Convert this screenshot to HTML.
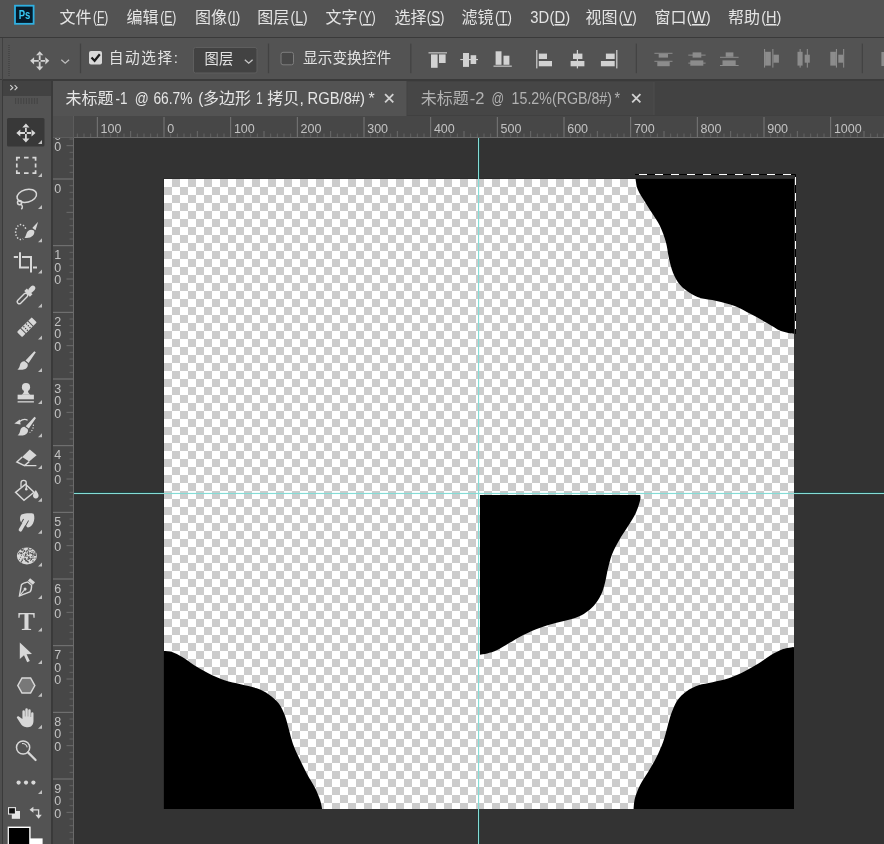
<!DOCTYPE html><html lang="zh-CN"><head><meta charset="utf-8"><title>Photoshop</title><style>
html,body{margin:0;padding:0}
body{width:884px;height:844px;background:#333;position:relative;overflow:hidden;font-family:"Liberation Sans","Noto Sans CJK SC",sans-serif;color:#ddd}
.abs{position:absolute}
#menubar,#tabbar,#hruler,#vruler,#toolbox,#optbar{will-change:transform}
.l{font-size:14.5px;word-spacing:2px}
#menubar{left:0;top:0;width:884px;height:37px;background:#535353}
#menubar span.mi{position:absolute;top:5px;font-size:16px;line-height:24px;color:#e6e6e6;white-space:nowrap}
#menubar u{text-decoration:underline;text-underline-offset:2px}
#optbar{left:0;top:38px;width:884px;height:41.4px;background:#535353;overflow:hidden}
.ot{font-size:14.7px;line-height:24px;color:#e2e2e2;white-space:nowrap}
#toolbox{left:3px;top:81px;width:48px;height:763px;background:#535353}
#tabbar{left:53px;top:81px;width:831px;height:35px;background:#424242}
.tab{position:absolute;top:0;height:35px;font-size:16px;line-height:34px;white-space:nowrap}
#hruler{left:53px;top:116px;width:831px;height:22px;background:#474747;overflow:hidden}
#vruler{left:53px;top:138px;width:21px;height:706px;background:#474747;overflow:hidden}
#work{left:74px;top:138px;width:810px;height:706px;background:#333;overflow:hidden}
</style></head><body>
<div class="abs" style="left:0;top:0;width:884px;height:844px;background:#3a3a3a"></div>
<div class="abs" style="left:0;top:80px;width:2px;height:764px;background:#4e4e4e"></div>
<!--EDGE-->
<div id="menubar" class="abs"><svg class="abs" style="left:0;top:0" width="884" height="37" viewBox="0 0 884 37" font-family="Liberation Sans, Noto Sans CJK SC, sans-serif" font-size="16" fill="#e4e4e4"><rect x="15" y="5.7" width="18.6" height="18.1" fill="#041a2a" stroke="#2fb0e2" stroke-width="1.8"/><text x="18.7" y="18.8" font-size="12" font-weight="bold" fill="#38c8f2" textLength="11.6" lengthAdjust="spacingAndGlyphs">Ps</text><text x="59.4" y="22.8">文件</text><text x="93.0" y="23" font-size="15.6" textLength="15.3" lengthAdjust="spacingAndGlyphs">(<tspan text-decoration="underline">F</tspan>)</text><text x="126.6" y="22.8">编辑</text><text x="160.2" y="23" font-size="15.6" textLength="16.1" lengthAdjust="spacingAndGlyphs">(<tspan text-decoration="underline">E</tspan>)</text><text x="195.0" y="22.8">图像</text><text x="227.4" y="23" font-size="15.6" textLength="12.8" lengthAdjust="spacingAndGlyphs">(<tspan text-decoration="underline">I</tspan>)</text><text x="257.3" y="22.8">图层</text><text x="290.6" y="23" font-size="15.6" textLength="17.0" lengthAdjust="spacingAndGlyphs">(<tspan text-decoration="underline">L</tspan>)</text><text x="325.4" y="22.8">文字</text><text x="358.7" y="23" font-size="15.6" textLength="17.0" lengthAdjust="spacingAndGlyphs">(<tspan text-decoration="underline">Y</tspan>)</text><text x="394.4" y="22.8">选择</text><text x="426.8" y="23" font-size="15.6" textLength="17.7" lengthAdjust="spacingAndGlyphs">(<tspan text-decoration="underline">S</tspan>)</text><text x="461.6" y="22.8">滤镜</text><text x="494.9" y="23" font-size="15.6" textLength="17.0" lengthAdjust="spacingAndGlyphs">(<tspan text-decoration="underline">T</tspan>)</text><text x="530.2" y="23" font-size="15.6" textLength="18.9" lengthAdjust="spacingAndGlyphs">3D</text><text x="549.6" y="23" font-size="15.6" textLength="20.5" lengthAdjust="spacingAndGlyphs">(<tspan text-decoration="underline">D</tspan>)</text><text x="585.4" y="22.8">视图</text><text x="618.7" y="23" font-size="15.6" textLength="17.9" lengthAdjust="spacingAndGlyphs">(<tspan text-decoration="underline">V</tspan>)</text><text x="654.4" y="22.8">窗口</text><text x="686.8" y="23" font-size="15.6" textLength="24.0" lengthAdjust="spacingAndGlyphs">(<tspan text-decoration="underline">W</tspan>)</text><text x="728.0" y="22.8">帮助</text><text x="761.2" y="23" font-size="15.6" textLength="20.2" lengthAdjust="spacingAndGlyphs">(<tspan text-decoration="underline">H</tspan>)</text></svg></div>
<div id="optbar" class="abs">
<svg class="abs" style="left:0;top:0" width="884" height="42" viewBox="0 38 884 42"><rect x="8" y="45" width="2" height="1" fill="#474747"/><rect x="8" y="47" width="2" height="1" fill="#474747"/><rect x="8" y="49" width="2" height="1" fill="#474747"/><rect x="8" y="51" width="2" height="1" fill="#474747"/><rect x="8" y="53" width="2" height="1" fill="#474747"/><rect x="8" y="55" width="2" height="1" fill="#474747"/><rect x="8" y="57" width="2" height="1" fill="#474747"/><rect x="8" y="59" width="2" height="1" fill="#474747"/><rect x="8" y="61" width="2" height="1" fill="#474747"/><rect x="8" y="63" width="2" height="1" fill="#474747"/><rect x="8" y="65" width="2" height="1" fill="#474747"/><rect x="8" y="67" width="2" height="1" fill="#474747"/><rect x="8" y="69" width="2" height="1" fill="#474747"/><rect x="8" y="71" width="2" height="1" fill="#474747"/><rect x="8" y="73" width="2" height="1" fill="#474747"/><rect x="8" y="75" width="2" height="1" fill="#474747"/><path d="M33.60 59.90 H45.80 V61.70 H33.60 Z M38.80 54.70 V66.90 H40.60 V54.70 Z M39.70 51.20 L43.30 55.20 L36.10 55.20 Z M39.70 70.40 L43.30 66.40 L36.10 66.40 Z M30.10 60.80 L34.10 57.20 L34.10 64.40 Z M49.30 60.80 L45.30 57.20 L45.30 64.40 Z " fill="#d2d2d2"/><path d="M61.3 59.8 L65.2 63.2 L69.1 59.8" fill="none" stroke="#bdbdbd" stroke-width="1.3"/><rect x="79.9" y="43.6" width="1.2" height="29.6" fill="#424242"/><rect x="267.9" y="43.6" width="1.2" height="29.6" fill="#424242"/><rect x="410.2" y="43.6" width="1.2" height="29.6" fill="#424242"/><rect x="635.7" y="43.6" width="1.2" height="29.6" fill="#424242"/><rect x="861.7" y="43.6" width="1.2" height="29.6" fill="#424242"/><rect x="89" y="51" width="13" height="13.5" rx="2" fill="#d8d8d8"/><path d="M91.5 57.5 L94.6 60.8 L99.8 54.2" fill="none" stroke="#1a1a1a" stroke-width="2.2"/><rect x="193.5" y="47.5" width="63.5" height="25.5" rx="2" fill="#424242" stroke="#5e5e5e" stroke-width="1"/><path d="M244.8 59.8 L248.7 63.2 L252.6 59.8" fill="none" stroke="#c8c8c8" stroke-width="1.3"/><rect x="281" y="52.3" width="12.5" height="12.5" rx="2" fill="#484848" stroke="#7d7d7d" stroke-width="1"/><rect x="428.5" y="52.3" width="18.5" height="1.1" fill="#d2d2d2"/><rect x="431.0" y="54.4" width="6.6" height="13.4" fill="#d2d2d2"/><rect x="439.0" y="54.4" width="6.6" height="8.6" fill="#d2d2d2"/><rect x="460.3" y="59.0" width="17.7" height="1.1" fill="#d2d2d2"/><rect x="463.0" y="53.0" width="6.0" height="13.9" fill="#d2d2d2"/><rect x="470.6" y="55.2" width="5.6" height="8.8" fill="#d2d2d2"/><rect x="493.5" y="65.6" width="18.3" height="1.1" fill="#d2d2d2"/><rect x="495.6" y="51.3" width="5.9" height="13.5" fill="#d2d2d2"/><rect x="503.5" y="55.7" width="5.9" height="9.1" fill="#d2d2d2"/><rect x="536.2" y="50.0" width="1.2" height="18.4" fill="#d2d2d2"/><rect x="538.8" y="53.6" width="8.2" height="5.4" fill="#d2d2d2"/><rect x="538.8" y="61.0" width="13.2" height="5.3" fill="#d2d2d2"/><rect x="576.8" y="50.0" width="1.2" height="18.4" fill="#d2d2d2"/><rect x="573.0" y="53.6" width="9.4" height="5.4" fill="#d2d2d2"/><rect x="570.6" y="61.0" width="13.8" height="5.3" fill="#d2d2d2"/><rect x="616.2" y="50.0" width="1.2" height="18.4" fill="#d2d2d2"/><rect x="605.9" y="53.6" width="8.8" height="5.4" fill="#d2d2d2"/><rect x="600.9" y="61.0" width="13.8" height="5.3" fill="#d2d2d2"/><rect x="654.4" y="52.8" width="18.1" height="1.0" fill="#8c8c8c"/><rect x="658.7" y="53.8" width="9.3" height="3.8" fill="#8c8c8c"/><rect x="654.4" y="60.8" width="18.1" height="1.0" fill="#8c8c8c"/><rect x="657.3" y="61.8" width="12.4" height="4.4" fill="#8c8c8c"/><rect x="688.3" y="54.6" width="17.3" height="1.0" fill="#8c8c8c"/><rect x="692.6" y="52.4" width="8.7" height="5.2" fill="#8c8c8c"/><rect x="688.3" y="62.6" width="17.3" height="1.0" fill="#8c8c8c"/><rect x="690.3" y="60.4" width="13.0" height="5.3" fill="#8c8c8c"/><rect x="720.0" y="56.8" width="18.6" height="1.0" fill="#8c8c8c"/><rect x="725.7" y="52.4" width="7.7" height="4.4" fill="#8c8c8c"/><rect x="720.0" y="65.0" width="18.6" height="1.0" fill="#8c8c8c"/><rect x="722.5" y="60.4" width="13.2" height="4.6" fill="#8c8c8c"/><rect x="764.0" y="49.0" width="1.1" height="18.6" fill="#8c8c8c"/><rect x="765.1" y="51.8" width="5.7" height="13.8" fill="#8c8c8c"/><rect x="772.3" y="49.0" width="1.1" height="18.6" fill="#8c8c8c"/><rect x="773.4" y="54.7" width="5.5" height="8.0" fill="#8c8c8c"/><rect x="799.6" y="49.0" width="1.1" height="18.6" fill="#8c8c8c"/><rect x="797.5" y="51.8" width="5.1" height="13.8" fill="#8c8c8c"/><rect x="806.8" y="49.0" width="1.1" height="18.6" fill="#8c8c8c"/><rect x="804.7" y="54.7" width="5.1" height="8.0" fill="#8c8c8c"/><rect x="835.9" y="49.0" width="1.1" height="18.6" fill="#8c8c8c"/><rect x="830.3" y="51.8" width="5.6" height="13.8" fill="#8c8c8c"/><rect x="843.1" y="49.0" width="1.1" height="18.6" fill="#8c8c8c"/><rect x="838.3" y="54.7" width="4.8" height="8.0" fill="#8c8c8c"/><rect x="881.4" y="52.0" width="2.6" height="14.0" fill="#8c8c8c"/></svg><span class="abs ot" style="left:108.7px;top:7.5px;letter-spacing:1.6px">自动选择<span class="l" style="font-size:15px">:</span></span><span class="abs ot" style="left:204.6px;top:8.6px;font-size:14.3px">图层</span><span class="abs ot" style="left:303px;top:7.5px">显示变换控件</span>
</div>
<div id="toolbox" class="abs">
<div class="abs" style="left:0;top:0;width:48px;height:15px;background:#424242"></div>
<svg class="abs" style="left:0;top:0" width="48" height="763" viewBox="3 81 48 763"><path d="M10.3 85.2 L12.8 87.7 L10.3 90.2 M14.6 85.2 L17.1 87.7 L14.6 90.2" fill="none" stroke="#cfcfcf" stroke-width="1.15"/><rect x="15.0" y="98" width="1.2" height="6" fill="#454545"/><rect x="17.7" y="98" width="1.2" height="6" fill="#454545"/><rect x="20.4" y="98" width="1.2" height="6" fill="#454545"/><rect x="23.1" y="98" width="1.2" height="6" fill="#454545"/><rect x="25.8" y="98" width="1.2" height="6" fill="#454545"/><rect x="28.5" y="98" width="1.2" height="6" fill="#454545"/><rect x="31.2" y="98" width="1.2" height="6" fill="#454545"/><rect x="33.9" y="98" width="1.2" height="6" fill="#454545"/><rect x="36.6" y="98" width="1.2" height="6" fill="#454545"/><rect x="7" y="118" width="37.5" height="28.5" rx="1.5" fill="#383838"/><path d="M19.80 132.10 H32.00 V133.90 H19.80 Z M25.00 126.90 V139.10 H26.80 V126.90 Z M25.90 123.40 L29.50 127.40 L22.30 127.40 Z M25.90 142.60 L29.50 138.60 L22.30 138.60 Z M16.30 133.00 L20.30 129.40 L20.30 136.60 Z M35.50 133.00 L31.50 129.40 L31.50 136.60 Z " fill="#d8d8d8"/><path d="M42 140.0 V144.0 H38 Z" fill="#c0c0c0"/><path d="M16.8 160.8 V157.7 H20 M24 157.7 H28.6 M32.4 157.7 H35.6 V160.8 M35.6 163.4 V167.6 M35.6 170.2 V173.2 H32.4 M28.6 173.2 H24 M20 173.2 H16.8 V170.2 M16.8 167.6 V163.4" fill="none" stroke="#d8d8d8" stroke-width="1.7"/><path d="M42 173.0 V177.0 H38 Z" fill="#c0c0c0"/><g fill="none" stroke="#d8d8d8" stroke-width="1.5"><ellipse cx="26.8" cy="195.8" rx="9.9" ry="6.3" transform="rotate(-14 26.8 195.8)"/><circle cx="19.6" cy="202.6" r="2.1"/><path d="M20.8 204.3 C23 205.5 22.6 208 21.3 209.3"/></g><path d="M42 205.0 V209.0 H38 Z" fill="#c0c0c0"/><path d="M25.7 228.8 A5.3 7.5 0 1 0 23.2 238.9" fill="none" stroke="#d8d8d8" stroke-width="1.5" stroke-dasharray="1.4 1.75"/><path d="M38.1 221.7 L35.5 230.2 L32.3 227.9 Z" fill="#d8d8d8"/><path d="M33.9 230.5 C31 228.5 27.6 230.4 26.7 233 C26.1 234.8 25.7 236.4 24.5 237.8 C27.6 238.3 31 237.7 33 235.5 C34.5 233.8 34.7 231.8 33.9 230.5 Z" fill="#d8d8d8"/><path d="M42 238.2 V242.2 H38 Z" fill="#c0c0c0"/><path d="M13.8 257 H18 M22 257 H31 V272.4 M20 252.3 V267.5 H29 M33 267.5 H37" fill="none" stroke="#d8d8d8" stroke-width="2"/><path d="M42 269.6 V273.6 H38 Z" fill="#c0c0c0"/><g transform="rotate(45 26 295)"><rect x="24" y="293.4" width="4" height="13.1" rx="2" fill="none" stroke="#d8d8d8" stroke-width="1.4"/><rect x="22" y="289.8" width="8" height="3.7" fill="#d8d8d8"/><rect x="23.5" y="282.8" width="5" height="8" rx="2.5" fill="#d8d8d8"/></g><path d="M42 303.4 V307.4 H38 Z" fill="#c0c0c0"/><g transform="rotate(-45 26.9 327.2)"><rect x="16.5" y="323.6" width="20.8" height="7.2" rx="0.9" fill="#d8d8d8"/><rect x="21.3" y="323" width="0.95" height="8.4" fill="#535353"/><rect x="31.55" y="323" width="0.95" height="8.4" fill="#535353"/><circle cx="25.10" cy="324.70" r="0.72" fill="#474747"/><circle cx="25.10" cy="327.20" r="0.72" fill="#474747"/><circle cx="25.10" cy="329.60" r="0.72" fill="#474747"/><circle cx="28.90" cy="324.70" r="0.72" fill="#474747"/><circle cx="28.90" cy="327.20" r="0.72" fill="#474747"/><circle cx="28.90" cy="329.60" r="0.72" fill="#474747"/></g><path d="M42 335.4 V339.4 H38 Z" fill="#c0c0c0"/><path d="M34.3 351.2 L35.8 352.3 L28.6 362.9 L25.5 360.6 Z M24.6 361.3 L27.4 363.5 C28.6 366 27 368.6 24.4 369.3 C22 370 19.4 369.8 17.4 369.6 C19.4 368.4 19.6 366.5 20 364.8 C20.6 362.4 22.6 361 24.6 361.3 Z" fill="#d8d8d8"/><path d="M42 368.0 V372.0 H38 Z" fill="#c0c0c0"/><circle cx="26" cy="387.2" r="4.1" fill="#d8d8d8"/><path d="M24 389.5 H28 C27.8 392 28.6 393.6 30.4 394.8 H21.6 C23.4 393.6 24.2 392 24 389.5 Z" fill="#d8d8d8"/><rect x="17.6" y="394.7" width="16.3" height="4.6" fill="#d8d8d8"/><rect x="17.6" y="401.2" width="16.3" height="1.3" fill="#d8d8d8"/><path d="M42 400.0 V404.0 H38 Z" fill="#c0c0c0"/><g transform="translate(0.2 65.6)"><path d="M34.3 351.2 L35.8 352.3 L28.6 362.9 L25.5 360.6 Z M24.6 361.3 L27.4 363.5 C28.6 366 27 368.6 24.4 369.3 C22 370 19.4 369.8 17.4 369.6 C19.4 368.4 19.6 366.5 20 364.8 C20.6 362.4 22.6 361 24.6 361.3 Z" fill="#d8d8d8"/></g><path d="M19.6 421.5 C22.5 419.2 25.5 419 27.6 420.2" fill="none" stroke="#d8d8d8" stroke-width="1.3"/><path d="M14.3 423.6 L19.8 419.6 L20.6 424.4 Z" fill="#d8d8d8"/><path d="M33.4 424.6 C33.6 428 32.4 431 29.6 432.6" fill="none" stroke="#d8d8d8" stroke-width="1.2" stroke-dasharray="1.2 1.6"/><path d="M42 433.2 V437.2 H38 Z" fill="#c0c0c0"/><path d="M29.8 449.6 L36.6 455.2 L29.2 461.6 L22.2 456.9 Z" fill="#d8d8d8"/><path d="M22.2 456.9 L16.8 462 L24.5 465.6 L29.2 461.6 M24.5 465.6 H36.4" fill="none" stroke="#d8d8d8" stroke-width="1.4"/><path d="M42 465.0 V469.0 H38 Z" fill="#c0c0c0"/><path d="M15.6 492.3 L25.5 484.2 L34 492.3 L24 500.3 Z" fill="none" stroke="#d8d8d8" stroke-width="1.5"/><path d="M26.3 489.5 V483 C26.3 479.5 21 479.5 21 483 V487" fill="none" stroke="#d8d8d8" stroke-width="1.3"/><circle cx="26.3" cy="489.3" r="1.3" fill="#d8d8d8"/><path d="M35.8 490 C37.5 492.5 38.6 494 38.6 495.6 a2.8 2.8 0 0 1 -5.6 0 C33 494 34.1 492.5 35.8 490 Z" fill="#d8d8d8"/><path d="M42 497.7 V501.7 H38 Z" fill="#c0c0c0"/><path d="M21.5 514.6 C25 513.2 30.5 513 33.6 513.8 C34.8 516.5 34.6 520.5 33 523.6 C31.6 526 29.5 527.6 27.6 527.6 L24 524 L20.5 521.6 C19.6 519 20 516 21.5 514.6 Z" fill="#d8d8d8"/><path d="M28.5 520.6 L23.5 529.4 M23.6 519 L21.6 522.6" stroke="#535353" stroke-width="1.1" fill="none"/><path d="M26.2 519.8 L20.4 529.8" stroke="#d8d8d8" stroke-width="3.5" stroke-linecap="round" fill="none"/><path d="M42 529.8 V533.8 H38 Z" fill="#c0c0c0"/><ellipse cx="26.9" cy="556" rx="10" ry="8.5" fill="#d8d8d8"/><circle cx="25.3" cy="558.7" r="0.7" fill="#535353"/><circle cx="32.9" cy="558.5" r="0.6" fill="#535353"/><circle cx="33.0" cy="558.0" r="0.5" fill="#535353"/><circle cx="24.7" cy="556.8" r="0.5" fill="#535353"/><circle cx="19.5" cy="559.2" r="0.5" fill="#535353"/><circle cx="28.1" cy="562.1" r="0.8" fill="#535353"/><circle cx="21.8" cy="553.7" r="0.8" fill="#535353"/><circle cx="35.1" cy="558.1" r="0.6" fill="#535353"/><circle cx="28.8" cy="558.1" r="0.6" fill="#535353"/><circle cx="28.5" cy="553.0" r="0.7" fill="#535353"/><circle cx="23.3" cy="552.3" r="0.7" fill="#535353"/><circle cx="29.0" cy="556.7" r="0.6" fill="#535353"/><circle cx="24.4" cy="551.4" r="0.6" fill="#535353"/><circle cx="21.6" cy="553.3" r="0.6" fill="#535353"/><circle cx="29.0" cy="549.7" r="0.6" fill="#535353"/><circle cx="20.9" cy="553.4" r="0.8" fill="#535353"/><circle cx="26.3" cy="551.8" r="0.8" fill="#535353"/><circle cx="31.3" cy="559.4" r="0.7" fill="#535353"/><circle cx="30.6" cy="560.5" r="0.5" fill="#535353"/><circle cx="22.9" cy="550.0" r="0.7" fill="#535353"/><circle cx="30.6" cy="552.9" r="0.7" fill="#535353"/><circle cx="21.1" cy="552.7" r="0.6" fill="#535353"/><circle cx="31.7" cy="549.6" r="0.6" fill="#535353"/><circle cx="25.7" cy="554.3" r="0.7" fill="#535353"/><circle cx="21.4" cy="549.8" r="0.7" fill="#535353"/><circle cx="25.7" cy="560.7" r="0.7" fill="#535353"/><circle cx="33.1" cy="556.8" r="0.6" fill="#535353"/><circle cx="28.6" cy="557.3" r="0.7" fill="#535353"/><circle cx="30.0" cy="558.8" r="0.6" fill="#535353"/><circle cx="28.7" cy="554.4" r="0.6" fill="#535353"/><circle cx="18.7" cy="553.8" r="0.7" fill="#535353"/><circle cx="30.1" cy="552.9" r="0.6" fill="#535353"/><circle cx="21.4" cy="561.7" r="0.8" fill="#535353"/><circle cx="29.2" cy="558.7" r="0.6" fill="#535353"/><circle cx="27.6" cy="561.4" r="0.7" fill="#535353"/><circle cx="26.9" cy="556.5" r="0.6" fill="#535353"/><circle cx="22.2" cy="560.3" r="0.8" fill="#535353"/><circle cx="24.5" cy="550.8" r="0.7" fill="#535353"/><circle cx="25.9" cy="554.4" r="0.8" fill="#535353"/><circle cx="28.5" cy="548.8" r="0.7" fill="#535353"/><circle cx="22.4" cy="559.1" r="0.5" fill="#535353"/><circle cx="25.4" cy="554.5" r="0.5" fill="#535353"/><circle cx="27.8" cy="559.0" r="0.6" fill="#535353"/><circle cx="27.0" cy="556.0" r="0.5" fill="#535353"/><circle cx="31.4" cy="558.8" r="0.5" fill="#535353"/><circle cx="32.0" cy="551.6" r="0.5" fill="#535353"/><circle cx="26.8" cy="560.6" r="0.6" fill="#535353"/><circle cx="33.0" cy="561.0" r="0.8" fill="#535353"/><circle cx="20.6" cy="557.2" r="0.5" fill="#535353"/><circle cx="31.2" cy="558.7" r="0.6" fill="#535353"/><circle cx="28.7" cy="553.2" r="0.5" fill="#535353"/><circle cx="33.3" cy="554.3" r="0.5" fill="#535353"/><circle cx="25.4" cy="555.7" r="0.7" fill="#535353"/><circle cx="35.4" cy="555.0" r="0.7" fill="#535353"/><circle cx="26.5" cy="560.7" r="0.6" fill="#535353"/><circle cx="27.8" cy="550.3" r="0.7" fill="#535353"/><circle cx="24.8" cy="559.2" r="0.7" fill="#535353"/><circle cx="35.4" cy="555.3" r="0.7" fill="#535353"/><circle cx="30.2" cy="549.9" r="0.6" fill="#535353"/><circle cx="21.4" cy="555.5" r="0.5" fill="#535353"/><circle cx="31.7" cy="556.7" r="0.6" fill="#535353"/><circle cx="23.7" cy="548.8" r="0.6" fill="#535353"/><circle cx="35.3" cy="553.0" r="0.8" fill="#535353"/><circle cx="24.1" cy="558.8" r="0.6" fill="#535353"/><circle cx="28.3" cy="559.3" r="0.7" fill="#535353"/><circle cx="33.7" cy="551.8" r="0.6" fill="#535353"/><circle cx="22.2" cy="550.3" r="0.5" fill="#535353"/><circle cx="22.2" cy="549.7" r="0.7" fill="#535353"/><circle cx="26.9" cy="550.6" r="0.6" fill="#535353"/><circle cx="28.2" cy="551.6" r="0.7" fill="#535353"/><circle cx="32.6" cy="555.1" r="0.6" fill="#535353"/><circle cx="34.3" cy="553.8" r="0.6" fill="#535353"/><circle cx="29.4" cy="558.2" r="0.8" fill="#535353"/><circle cx="28.1" cy="553.2" r="0.7" fill="#535353"/><circle cx="34.3" cy="555.2" r="0.6" fill="#535353"/><circle cx="23.7" cy="555.1" r="0.5" fill="#535353"/><circle cx="34.2" cy="554.9" r="0.7" fill="#535353"/><circle cx="32.4" cy="553.9" r="0.8" fill="#535353"/><circle cx="28.8" cy="552.8" r="0.6" fill="#535353"/><circle cx="25.7" cy="559.7" r="0.7" fill="#535353"/><circle cx="26.6" cy="561.1" r="0.5" fill="#535353"/><circle cx="31.5" cy="553.5" r="0.6" fill="#535353"/><circle cx="19.3" cy="552.3" r="0.6" fill="#535353"/><circle cx="32.6" cy="553.3" r="0.7" fill="#535353"/><circle cx="25.7" cy="555.8" r="0.6" fill="#535353"/><path d="M42 562.6 V566.6 H38 Z" fill="#c0c0c0"/><g transform="rotate(40 26 588)"><path d="M26 598.2 L20.5 588.6 C20.2 586 22.5 583.5 23.5 582.3 H28.5 C29.5 583.5 31.8 586 31.5 588.6 Z" fill="none" stroke="#d8d8d8" stroke-width="1.4"/><path d="M26 597.5 V590.5" stroke="#d8d8d8" stroke-width="1.1"/><circle cx="26" cy="589.4" r="1.5" fill="#d8d8d8"/><rect x="22.8" y="577.8" width="6.4" height="3.4" fill="#d8d8d8"/></g><path d="M42 595.0 V599.0 H38 Z" fill="#c0c0c0"/><text x="26.6" y="629.8" text-anchor="middle" font-family="Liberation Serif, serif" font-weight="bold" font-size="25.5" fill="#d8d8d8">T</text><path d="M42 627.5 V631.5 H38 Z" fill="#c0c0c0"/><path d="M19.8 642.6 V659 L24 655.2 L27.2 662.2 L29.8 661 L26.6 654.2 L32 654 Z" fill="#d8d8d8"/><path d="M42 660.0 V664.0 H38 Z" fill="#c0c0c0"/><path d="M17.8 685.5 L22 677.9 H30.6 L34.8 685.5 L30.6 693.1 H22 Z" fill="#787878" stroke="#d8d8d8" stroke-width="1.5"/><path d="M42 692.7 V696.7 H38 Z" fill="#c0c0c0"/><path d="M22.4 719 V711.5 a1.25 1.25 0 0 1 2.5 0 V716.5 H25.3 V709.6 a1.25 1.25 0 0 1 2.5 0 V716.5 H28.2 V710.4 a1.25 1.25 0 0 1 2.5 0 V717 H31.1 V713.4 a1.2 1.2 0 0 1 2.4 0 V720.5 C33.5 724.5 31.5 727.2 28 727.2 H26.5 C23.5 727.2 21.8 725.3 20.3 723 L16.9 717.8 C16.5 716.8 17.8 715.8 18.9 716.6 Z" fill="#d8d8d8"/><path d="M42 724.7 V728.7 H38 Z" fill="#c0c0c0"/><circle cx="23.1" cy="747.5" r="6.6" fill="none" stroke="#d8d8d8" stroke-width="1.5"/><path d="M28 752.4 L35.6 760" stroke="#d8d8d8" stroke-width="2.2" stroke-linecap="round"/><path d="M22 743.6 C24.5 743.2 26.8 744.8 27.2 747.4" fill="none" stroke="#d8d8d8" stroke-width="1.1"/><circle cx="18.6" cy="782.6" r="2.1" fill="#d8d8d8"/><circle cx="26.0" cy="782.6" r="2.1" fill="#d8d8d8"/><circle cx="33.4" cy="782.6" r="2.1" fill="#d8d8d8"/><path d="M42 790.0 V794.0 H38 Z" fill="#c0c0c0"/><rect x="11.8" y="811" width="8.2" height="7.8" fill="#e4e4e4"/><rect x="8" y="807.1" width="8" height="7.5" fill="#e4e4e4"/><rect x="9.1" y="808.2" width="5.8" height="5.3" fill="#111"/><path d="M33 809.8 H38.6 V815" fill="none" stroke="#d8d8d8" stroke-width="1.3"/><path d="M29.5 809.8 L33.4 806.8 V812.8 Z M38.6 818.8 L35.4 814.8 H41.8 Z" fill="#d8d8d8"/><rect x="30" y="838.4" width="12.6" height="6" fill="#fff"/><rect x="7.7" y="826.6" width="22.9" height="18" fill="#fff"/><rect x="8.9" y="828" width="20.3" height="17" fill="#000"/></svg>
</div>
<div id="tabbar" class="abs"><svg class="abs" style="left:0;top:0" width="831" height="35" viewBox="53 81 831 35" font-family="Liberation Sans, Noto Sans CJK SC, sans-serif" font-size="16"><rect x="53" y="81" width="831" height="35" fill="#424242"/><rect x="53" y="81" width="353.5" height="35" fill="#535353"/><rect x="407.5" y="82" width="246.5" height="33" fill="#464646"/><rect x="653.5" y="82" width="1" height="33" fill="#4c4c4c"/><rect x="53" y="115" width="831" height="1" fill="#404040"/><rect x="53" y="115" width="353.5" height="1" fill="#535353"/><text x="65.6" y="103.8" fill="#e6e6e6">未标题</text><text x="115.6" y="103.9" font-size="15.6" textLength="12.0" lengthAdjust="spacingAndGlyphs" fill="#e6e6e6">-1</text><text x="134.8" y="103.9" font-size="15.6" textLength="14.0" lengthAdjust="spacingAndGlyphs" fill="#e6e6e6">@</text><text x="153.4" y="103.9" font-size="15.6" textLength="39.1" lengthAdjust="spacingAndGlyphs" fill="#e6e6e6">66.7%</text><text x="198.2" y="103.9" font-size="15.6" textLength="5.1" lengthAdjust="spacingAndGlyphs" fill="#e6e6e6">(</text><text x="203.0" y="103.8" fill="#e6e6e6">多边形</text><text x="256.2" y="103.9" font-size="15.6" textLength="6.4" lengthAdjust="spacingAndGlyphs" fill="#e6e6e6">1</text><text x="267.3" y="103.8" fill="#e6e6e6">拷贝</text><text x="299.6" y="103.9" font-size="15.6" textLength="4.4" lengthAdjust="spacingAndGlyphs" fill="#e6e6e6">,</text><text x="307.6" y="103.9" font-size="15.6" textLength="57.4" lengthAdjust="spacingAndGlyphs" fill="#e6e6e6">RGB/8#)</text><text x="368.6" y="103.9" font-size="15.6" textLength="6.2" lengthAdjust="spacingAndGlyphs" fill="#e6e6e6">*</text><path d="M385.1 94.2 L393.3 102.4 M393.3 94.2 L385.1 102.4" stroke="#d2d2d2" stroke-width="1.8" fill="none"/><text x="420.7" y="103.8" fill="#b2b2b2">未标题</text><text x="469.8" y="103.9" font-size="15.6" textLength="14.7" lengthAdjust="spacingAndGlyphs" fill="#b2b2b2">-2</text><text x="491.4" y="103.9" font-size="15.6" textLength="12.6" lengthAdjust="spacingAndGlyphs" fill="#b2b2b2">@</text><text x="511.6" y="103.9" font-size="15.6" textLength="100.4" lengthAdjust="spacingAndGlyphs" fill="#b2b2b2">15.2%(RGB/8#)</text><text x="614.6" y="103.9" font-size="15.6" textLength="5.6" lengthAdjust="spacingAndGlyphs" fill="#b2b2b2">*</text><path d="M632.2 94.2 L640.4 102.4 M640.4 94.2 L632.2 102.4" stroke="#d2d2d2" stroke-width="1.8" fill="none"/></svg></div>
<div id="hruler" class="abs"><svg class="abs" style="left:0;top:0" width="831" height="22" viewBox="53 116 831 22" font-family="Liberation Sans, sans-serif" font-size="12.5" fill="#c2c2c2"><rect x="53" y="116" width="831" height="22" fill="#474747"/><rect x="53" y="137" width="831" height="1" fill="#6a6a6a"/><rect x="76.83" y="133.5" width="1" height="3.5" fill="#626262"/><rect x="83.50" y="133.5" width="1" height="3.5" fill="#626262"/><rect x="90.17" y="133.5" width="1" height="3.5" fill="#626262"/><rect x="96.83" y="117" width="1" height="20" fill="#787878"/><text x="100.5" y="132.5">100</text><rect x="103.50" y="133.5" width="1" height="3.5" fill="#626262"/><rect x="110.17" y="133.5" width="1" height="3.5" fill="#626262"/><rect x="116.83" y="133.5" width="1" height="3.5" fill="#626262"/><rect x="123.50" y="133.5" width="1" height="3.5" fill="#626262"/><rect x="130.17" y="131" width="1" height="6" fill="#6c6c6c"/><rect x="136.83" y="133.5" width="1" height="3.5" fill="#626262"/><rect x="143.50" y="133.5" width="1" height="3.5" fill="#626262"/><rect x="150.17" y="133.5" width="1" height="3.5" fill="#626262"/><rect x="156.83" y="133.5" width="1" height="3.5" fill="#626262"/><rect x="163.50" y="117" width="1" height="20" fill="#787878"/><text x="167.2" y="132.5">0</text><rect x="170.17" y="133.5" width="1" height="3.5" fill="#626262"/><rect x="176.83" y="133.5" width="1" height="3.5" fill="#626262"/><rect x="183.50" y="133.5" width="1" height="3.5" fill="#626262"/><rect x="190.17" y="133.5" width="1" height="3.5" fill="#626262"/><rect x="196.83" y="131" width="1" height="6" fill="#6c6c6c"/><rect x="203.50" y="133.5" width="1" height="3.5" fill="#626262"/><rect x="210.17" y="133.5" width="1" height="3.5" fill="#626262"/><rect x="216.83" y="133.5" width="1" height="3.5" fill="#626262"/><rect x="223.50" y="133.5" width="1" height="3.5" fill="#626262"/><rect x="230.17" y="117" width="1" height="20" fill="#787878"/><text x="233.9" y="132.5">100</text><rect x="236.83" y="133.5" width="1" height="3.5" fill="#626262"/><rect x="243.50" y="133.5" width="1" height="3.5" fill="#626262"/><rect x="250.17" y="133.5" width="1" height="3.5" fill="#626262"/><rect x="256.83" y="133.5" width="1" height="3.5" fill="#626262"/><rect x="263.50" y="131" width="1" height="6" fill="#6c6c6c"/><rect x="270.17" y="133.5" width="1" height="3.5" fill="#626262"/><rect x="276.83" y="133.5" width="1" height="3.5" fill="#626262"/><rect x="283.50" y="133.5" width="1" height="3.5" fill="#626262"/><rect x="290.17" y="133.5" width="1" height="3.5" fill="#626262"/><rect x="296.83" y="117" width="1" height="20" fill="#787878"/><text x="300.5" y="132.5">200</text><rect x="303.50" y="133.5" width="1" height="3.5" fill="#626262"/><rect x="310.17" y="133.5" width="1" height="3.5" fill="#626262"/><rect x="316.83" y="133.5" width="1" height="3.5" fill="#626262"/><rect x="323.50" y="133.5" width="1" height="3.5" fill="#626262"/><rect x="330.17" y="131" width="1" height="6" fill="#6c6c6c"/><rect x="336.83" y="133.5" width="1" height="3.5" fill="#626262"/><rect x="343.50" y="133.5" width="1" height="3.5" fill="#626262"/><rect x="350.17" y="133.5" width="1" height="3.5" fill="#626262"/><rect x="356.83" y="133.5" width="1" height="3.5" fill="#626262"/><rect x="363.50" y="117" width="1" height="20" fill="#787878"/><text x="367.2" y="132.5">300</text><rect x="370.17" y="133.5" width="1" height="3.5" fill="#626262"/><rect x="376.83" y="133.5" width="1" height="3.5" fill="#626262"/><rect x="383.50" y="133.5" width="1" height="3.5" fill="#626262"/><rect x="390.17" y="133.5" width="1" height="3.5" fill="#626262"/><rect x="396.83" y="131" width="1" height="6" fill="#6c6c6c"/><rect x="403.50" y="133.5" width="1" height="3.5" fill="#626262"/><rect x="410.17" y="133.5" width="1" height="3.5" fill="#626262"/><rect x="416.83" y="133.5" width="1" height="3.5" fill="#626262"/><rect x="423.50" y="133.5" width="1" height="3.5" fill="#626262"/><rect x="430.17" y="117" width="1" height="20" fill="#787878"/><text x="433.9" y="132.5">400</text><rect x="436.83" y="133.5" width="1" height="3.5" fill="#626262"/><rect x="443.50" y="133.5" width="1" height="3.5" fill="#626262"/><rect x="450.17" y="133.5" width="1" height="3.5" fill="#626262"/><rect x="456.83" y="133.5" width="1" height="3.5" fill="#626262"/><rect x="463.50" y="131" width="1" height="6" fill="#6c6c6c"/><rect x="470.17" y="133.5" width="1" height="3.5" fill="#626262"/><rect x="476.83" y="133.5" width="1" height="3.5" fill="#626262"/><rect x="483.50" y="133.5" width="1" height="3.5" fill="#626262"/><rect x="490.17" y="133.5" width="1" height="3.5" fill="#626262"/><rect x="496.83" y="117" width="1" height="20" fill="#787878"/><text x="500.5" y="132.5">500</text><rect x="503.50" y="133.5" width="1" height="3.5" fill="#626262"/><rect x="510.17" y="133.5" width="1" height="3.5" fill="#626262"/><rect x="516.83" y="133.5" width="1" height="3.5" fill="#626262"/><rect x="523.50" y="133.5" width="1" height="3.5" fill="#626262"/><rect x="530.17" y="131" width="1" height="6" fill="#6c6c6c"/><rect x="536.83" y="133.5" width="1" height="3.5" fill="#626262"/><rect x="543.50" y="133.5" width="1" height="3.5" fill="#626262"/><rect x="550.17" y="133.5" width="1" height="3.5" fill="#626262"/><rect x="556.83" y="133.5" width="1" height="3.5" fill="#626262"/><rect x="563.50" y="117" width="1" height="20" fill="#787878"/><text x="567.2" y="132.5">600</text><rect x="570.17" y="133.5" width="1" height="3.5" fill="#626262"/><rect x="576.83" y="133.5" width="1" height="3.5" fill="#626262"/><rect x="583.50" y="133.5" width="1" height="3.5" fill="#626262"/><rect x="590.17" y="133.5" width="1" height="3.5" fill="#626262"/><rect x="596.83" y="131" width="1" height="6" fill="#6c6c6c"/><rect x="603.50" y="133.5" width="1" height="3.5" fill="#626262"/><rect x="610.17" y="133.5" width="1" height="3.5" fill="#626262"/><rect x="616.83" y="133.5" width="1" height="3.5" fill="#626262"/><rect x="623.50" y="133.5" width="1" height="3.5" fill="#626262"/><rect x="630.17" y="117" width="1" height="20" fill="#787878"/><text x="633.9" y="132.5">700</text><rect x="636.83" y="133.5" width="1" height="3.5" fill="#626262"/><rect x="643.50" y="133.5" width="1" height="3.5" fill="#626262"/><rect x="650.17" y="133.5" width="1" height="3.5" fill="#626262"/><rect x="656.83" y="133.5" width="1" height="3.5" fill="#626262"/><rect x="663.50" y="131" width="1" height="6" fill="#6c6c6c"/><rect x="670.17" y="133.5" width="1" height="3.5" fill="#626262"/><rect x="676.83" y="133.5" width="1" height="3.5" fill="#626262"/><rect x="683.50" y="133.5" width="1" height="3.5" fill="#626262"/><rect x="690.17" y="133.5" width="1" height="3.5" fill="#626262"/><rect x="696.83" y="117" width="1" height="20" fill="#787878"/><text x="700.5" y="132.5">800</text><rect x="703.50" y="133.5" width="1" height="3.5" fill="#626262"/><rect x="710.17" y="133.5" width="1" height="3.5" fill="#626262"/><rect x="716.83" y="133.5" width="1" height="3.5" fill="#626262"/><rect x="723.50" y="133.5" width="1" height="3.5" fill="#626262"/><rect x="730.17" y="131" width="1" height="6" fill="#6c6c6c"/><rect x="736.83" y="133.5" width="1" height="3.5" fill="#626262"/><rect x="743.50" y="133.5" width="1" height="3.5" fill="#626262"/><rect x="750.17" y="133.5" width="1" height="3.5" fill="#626262"/><rect x="756.83" y="133.5" width="1" height="3.5" fill="#626262"/><rect x="763.50" y="117" width="1" height="20" fill="#787878"/><text x="767.2" y="132.5">900</text><rect x="770.17" y="133.5" width="1" height="3.5" fill="#626262"/><rect x="776.83" y="133.5" width="1" height="3.5" fill="#626262"/><rect x="783.50" y="133.5" width="1" height="3.5" fill="#626262"/><rect x="790.17" y="133.5" width="1" height="3.5" fill="#626262"/><rect x="796.83" y="131" width="1" height="6" fill="#6c6c6c"/><rect x="803.50" y="133.5" width="1" height="3.5" fill="#626262"/><rect x="810.17" y="133.5" width="1" height="3.5" fill="#626262"/><rect x="816.83" y="133.5" width="1" height="3.5" fill="#626262"/><rect x="823.50" y="133.5" width="1" height="3.5" fill="#626262"/><rect x="830.17" y="117" width="1" height="20" fill="#787878"/><text x="833.9" y="132.5">1000</text><rect x="836.83" y="133.5" width="1" height="3.5" fill="#626262"/><rect x="843.50" y="133.5" width="1" height="3.5" fill="#626262"/><rect x="850.17" y="133.5" width="1" height="3.5" fill="#626262"/><rect x="856.83" y="133.5" width="1" height="3.5" fill="#626262"/><rect x="863.50" y="131" width="1" height="6" fill="#6c6c6c"/><rect x="870.17" y="133.5" width="1" height="3.5" fill="#626262"/><rect x="876.83" y="133.5" width="1" height="3.5" fill="#626262"/><rect x="883.50" y="133.5" width="1" height="3.5" fill="#626262"/></svg></div>
<div id="vruler" class="abs"><svg class="abs" style="left:0;top:0" width="21" height="706" viewBox="53 138 21 706" font-family="Liberation Sans, sans-serif" font-size="12.5" fill="#c2c2c2"><rect x="53" y="138" width="21" height="706" fill="#474747"/><rect x="73" y="138" width="1" height="706" fill="#6a6a6a"/><text x="54.3" y="125.9">1</text><text x="54.3" y="140.0">0</text><text x="54.3" y="150.8">0</text><rect x="69.5" y="138.50" width="3.5" height="1" fill="#626262"/><rect x="66.5" y="145.17" width="6.5" height="1" fill="#6c6c6c"/><rect x="69.5" y="151.83" width="3.5" height="1" fill="#626262"/><rect x="69.5" y="158.50" width="3.5" height="1" fill="#626262"/><rect x="69.5" y="165.17" width="3.5" height="1" fill="#626262"/><rect x="69.5" y="171.83" width="3.5" height="1" fill="#626262"/><rect x="53" y="178.50" width="20" height="1" fill="#787878"/><text x="54.3" y="192.6">0</text><rect x="69.5" y="185.17" width="3.5" height="1" fill="#626262"/><rect x="69.5" y="191.83" width="3.5" height="1" fill="#626262"/><rect x="69.5" y="198.50" width="3.5" height="1" fill="#626262"/><rect x="69.5" y="205.17" width="3.5" height="1" fill="#626262"/><rect x="66.5" y="211.83" width="6.5" height="1" fill="#6c6c6c"/><rect x="69.5" y="218.50" width="3.5" height="1" fill="#626262"/><rect x="69.5" y="225.17" width="3.5" height="1" fill="#626262"/><rect x="69.5" y="231.83" width="3.5" height="1" fill="#626262"/><rect x="69.5" y="238.50" width="3.5" height="1" fill="#626262"/><rect x="53" y="245.17" width="20" height="1" fill="#787878"/><text x="54.3" y="259.3">1</text><text x="54.3" y="271.7">0</text><text x="54.3" y="284.2">0</text><rect x="69.5" y="251.83" width="3.5" height="1" fill="#626262"/><rect x="69.5" y="258.50" width="3.5" height="1" fill="#626262"/><rect x="69.5" y="265.17" width="3.5" height="1" fill="#626262"/><rect x="69.5" y="271.83" width="3.5" height="1" fill="#626262"/><rect x="66.5" y="278.50" width="6.5" height="1" fill="#6c6c6c"/><rect x="69.5" y="285.17" width="3.5" height="1" fill="#626262"/><rect x="69.5" y="291.83" width="3.5" height="1" fill="#626262"/><rect x="69.5" y="298.50" width="3.5" height="1" fill="#626262"/><rect x="69.5" y="305.17" width="3.5" height="1" fill="#626262"/><rect x="53" y="311.83" width="20" height="1" fill="#787878"/><text x="54.3" y="325.9">2</text><text x="54.3" y="338.4">0</text><text x="54.3" y="350.8">0</text><rect x="69.5" y="318.50" width="3.5" height="1" fill="#626262"/><rect x="69.5" y="325.17" width="3.5" height="1" fill="#626262"/><rect x="69.5" y="331.83" width="3.5" height="1" fill="#626262"/><rect x="69.5" y="338.50" width="3.5" height="1" fill="#626262"/><rect x="66.5" y="345.17" width="6.5" height="1" fill="#6c6c6c"/><rect x="69.5" y="351.83" width="3.5" height="1" fill="#626262"/><rect x="69.5" y="358.50" width="3.5" height="1" fill="#626262"/><rect x="69.5" y="365.17" width="3.5" height="1" fill="#626262"/><rect x="69.5" y="371.83" width="3.5" height="1" fill="#626262"/><rect x="53" y="378.50" width="20" height="1" fill="#787878"/><text x="54.3" y="392.6">3</text><text x="54.3" y="405.1">0</text><text x="54.3" y="417.5">0</text><rect x="69.5" y="385.17" width="3.5" height="1" fill="#626262"/><rect x="69.5" y="391.83" width="3.5" height="1" fill="#626262"/><rect x="69.5" y="398.50" width="3.5" height="1" fill="#626262"/><rect x="69.5" y="405.17" width="3.5" height="1" fill="#626262"/><rect x="66.5" y="411.83" width="6.5" height="1" fill="#6c6c6c"/><rect x="69.5" y="418.50" width="3.5" height="1" fill="#626262"/><rect x="69.5" y="425.17" width="3.5" height="1" fill="#626262"/><rect x="69.5" y="431.83" width="3.5" height="1" fill="#626262"/><rect x="69.5" y="438.50" width="3.5" height="1" fill="#626262"/><rect x="53" y="445.17" width="20" height="1" fill="#787878"/><text x="54.3" y="459.3">4</text><text x="54.3" y="471.7">0</text><text x="54.3" y="484.2">0</text><rect x="69.5" y="451.83" width="3.5" height="1" fill="#626262"/><rect x="69.5" y="458.50" width="3.5" height="1" fill="#626262"/><rect x="69.5" y="465.17" width="3.5" height="1" fill="#626262"/><rect x="69.5" y="471.83" width="3.5" height="1" fill="#626262"/><rect x="66.5" y="478.50" width="6.5" height="1" fill="#6c6c6c"/><rect x="69.5" y="485.17" width="3.5" height="1" fill="#626262"/><rect x="69.5" y="491.83" width="3.5" height="1" fill="#626262"/><rect x="69.5" y="498.50" width="3.5" height="1" fill="#626262"/><rect x="69.5" y="505.17" width="3.5" height="1" fill="#626262"/><rect x="53" y="511.83" width="20" height="1" fill="#787878"/><text x="54.3" y="525.9">5</text><text x="54.3" y="538.4">0</text><text x="54.3" y="550.8">0</text><rect x="69.5" y="518.50" width="3.5" height="1" fill="#626262"/><rect x="69.5" y="525.17" width="3.5" height="1" fill="#626262"/><rect x="69.5" y="531.83" width="3.5" height="1" fill="#626262"/><rect x="69.5" y="538.50" width="3.5" height="1" fill="#626262"/><rect x="66.5" y="545.17" width="6.5" height="1" fill="#6c6c6c"/><rect x="69.5" y="551.83" width="3.5" height="1" fill="#626262"/><rect x="69.5" y="558.50" width="3.5" height="1" fill="#626262"/><rect x="69.5" y="565.17" width="3.5" height="1" fill="#626262"/><rect x="69.5" y="571.83" width="3.5" height="1" fill="#626262"/><rect x="53" y="578.50" width="20" height="1" fill="#787878"/><text x="54.3" y="592.6">6</text><text x="54.3" y="605.1">0</text><text x="54.3" y="617.5">0</text><rect x="69.5" y="585.17" width="3.5" height="1" fill="#626262"/><rect x="69.5" y="591.83" width="3.5" height="1" fill="#626262"/><rect x="69.5" y="598.50" width="3.5" height="1" fill="#626262"/><rect x="69.5" y="605.17" width="3.5" height="1" fill="#626262"/><rect x="66.5" y="611.83" width="6.5" height="1" fill="#6c6c6c"/><rect x="69.5" y="618.50" width="3.5" height="1" fill="#626262"/><rect x="69.5" y="625.17" width="3.5" height="1" fill="#626262"/><rect x="69.5" y="631.83" width="3.5" height="1" fill="#626262"/><rect x="69.5" y="638.50" width="3.5" height="1" fill="#626262"/><rect x="53" y="645.17" width="20" height="1" fill="#787878"/><text x="54.3" y="659.3">7</text><text x="54.3" y="671.7">0</text><text x="54.3" y="684.2">0</text><rect x="69.5" y="651.83" width="3.5" height="1" fill="#626262"/><rect x="69.5" y="658.50" width="3.5" height="1" fill="#626262"/><rect x="69.5" y="665.17" width="3.5" height="1" fill="#626262"/><rect x="69.5" y="671.83" width="3.5" height="1" fill="#626262"/><rect x="66.5" y="678.50" width="6.5" height="1" fill="#6c6c6c"/><rect x="69.5" y="685.17" width="3.5" height="1" fill="#626262"/><rect x="69.5" y="691.83" width="3.5" height="1" fill="#626262"/><rect x="69.5" y="698.50" width="3.5" height="1" fill="#626262"/><rect x="69.5" y="705.17" width="3.5" height="1" fill="#626262"/><rect x="53" y="711.83" width="20" height="1" fill="#787878"/><text x="54.3" y="725.9">8</text><text x="54.3" y="738.4">0</text><text x="54.3" y="750.8">0</text><rect x="69.5" y="718.50" width="3.5" height="1" fill="#626262"/><rect x="69.5" y="725.17" width="3.5" height="1" fill="#626262"/><rect x="69.5" y="731.83" width="3.5" height="1" fill="#626262"/><rect x="69.5" y="738.50" width="3.5" height="1" fill="#626262"/><rect x="66.5" y="745.17" width="6.5" height="1" fill="#6c6c6c"/><rect x="69.5" y="751.83" width="3.5" height="1" fill="#626262"/><rect x="69.5" y="758.50" width="3.5" height="1" fill="#626262"/><rect x="69.5" y="765.17" width="3.5" height="1" fill="#626262"/><rect x="69.5" y="771.83" width="3.5" height="1" fill="#626262"/><rect x="53" y="778.50" width="20" height="1" fill="#787878"/><text x="54.3" y="792.6">9</text><text x="54.3" y="805.1">0</text><text x="54.3" y="817.5">0</text><rect x="69.5" y="785.17" width="3.5" height="1" fill="#626262"/><rect x="69.5" y="791.83" width="3.5" height="1" fill="#626262"/><rect x="69.5" y="798.50" width="3.5" height="1" fill="#626262"/><rect x="69.5" y="805.17" width="3.5" height="1" fill="#626262"/><rect x="66.5" y="811.83" width="6.5" height="1" fill="#6c6c6c"/><rect x="69.5" y="818.50" width="3.5" height="1" fill="#626262"/><rect x="69.5" y="825.17" width="3.5" height="1" fill="#626262"/><rect x="69.5" y="831.83" width="3.5" height="1" fill="#626262"/><rect x="69.5" y="838.50" width="3.5" height="1" fill="#626262"/><rect x="53" y="845.17" width="20" height="1" fill="#787878"/><text x="54.3" y="859.3">1</text><text x="54.3" y="871.7">0</text><text x="54.3" y="884.2">0</text><text x="54.3" y="896.6">0</text></svg></div>
<div class="abs" style="left:53px;top:116px;width:21px;height:22px;background:#4f4f4f;box-sizing:border-box;border-right:1px solid #5c5c5c;border-bottom:1px solid #5c5c5c"></div>
<div id="work" class="abs">
<svg class="abs" style="left:0;top:0" width="810" height="706" viewBox="74 138 810 706">
<defs><pattern id="ck" x="164" y="179" width="16" height="16" patternUnits="userSpaceOnUse"><rect width="16" height="16" fill="#fff"/><rect x="8" width="8" height="8" fill="#ccc"/><rect y="8" width="8" height="8" fill="#ccc"/></pattern>
<clipPath id="cv"><rect x="164" y="179" width="630" height="630"/></clipPath></defs>
<rect x="163" y="178" width="631" height="631" fill="#2b2b2b"/>
<rect x="164" y="179" width="630" height="630" fill="url(#ck)"/>
<g clip-path="url(#cv)" fill="#000">
<path d="M635.5 179.0 C635.9 180.8 636.4 186.2 638.0 190.0 C639.6 193.8 642.7 198.2 645.0 202.0 C647.3 205.8 649.5 209.0 652.0 213.0 C654.5 217.0 657.7 221.1 660.0 226.0 C662.3 230.9 664.5 237.1 666.0 242.5 C667.5 247.9 667.8 253.6 669.0 258.6 C670.2 263.6 671.2 268.3 673.0 272.7 C674.8 277.1 677.2 281.4 680.0 284.8 C682.8 288.2 686.6 290.7 690.0 292.9 C693.4 295.1 696.1 296.6 700.5 297.9 C704.9 299.2 710.9 299.5 716.6 300.9 C722.3 302.2 729.0 303.8 734.7 306.0 C740.4 308.2 745.4 311.2 750.8 314.0 C756.2 316.8 762.0 320.2 767.0 323.0 C772.0 325.8 776.5 329.2 781.0 331.0 C785.5 332.8 791.8 333.3 794.0 333.8 L794 179 Z"/>
<path d="M640.2 495.0 C640.2 495.8 640.9 497.1 640.2 500.0 C639.5 502.9 638.1 507.8 636.1 512.2 C634.1 516.6 630.9 521.6 628.0 526.3 C625.1 531.0 621.7 535.7 619.0 540.4 C616.3 545.1 613.8 549.8 612.0 554.5 C610.2 559.2 609.2 563.9 608.0 568.6 C606.8 573.3 606.2 578.4 605.0 582.7 C603.8 587.1 602.9 590.9 601.0 594.7 C599.1 598.6 596.7 602.6 593.8 605.8 C590.9 609.0 587.5 611.7 583.8 613.9 C580.1 616.1 576.4 617.4 571.7 618.9 C567.0 620.4 561.0 621.5 555.6 623.0 C550.2 624.5 544.9 626.0 539.5 628.0 C534.1 630.0 528.3 632.5 523.3 635.0 C518.2 637.5 513.5 640.6 509.2 643.1 C504.9 645.6 500.9 648.4 497.2 650.1 C493.5 651.9 490.0 652.8 487.1 653.6 C484.2 654.4 481.2 654.6 480.0 654.8 L480 495 Z"/>
<path d="M164.0 651.1 C165.3 651.3 169.1 651.1 172.1 652.1 C175.1 653.1 178.5 654.9 182.2 657.1 C185.9 659.3 189.8 662.5 194.2 665.2 C198.5 667.9 203.2 670.7 208.3 673.2 C213.4 675.7 219.1 678.4 224.5 680.3 C229.9 682.1 235.2 683.0 240.6 684.3 C246.0 685.6 252.0 686.6 256.7 688.3 C261.4 690.0 265.1 691.9 268.8 694.4 C272.5 696.9 276.1 699.9 278.8 703.4 C281.5 706.9 283.2 711.1 284.9 715.5 C286.6 719.9 287.6 724.9 288.9 729.6 C290.2 734.3 291.2 739.0 292.9 743.7 C294.6 748.4 296.6 752.8 299.0 757.8 C301.4 762.8 304.3 768.9 307.0 773.9 C309.7 778.9 312.9 783.6 315.1 788.0 C317.3 792.4 318.9 796.6 320.1 800.1 C321.3 803.6 321.8 807.5 322.1 809.0 L164 809 Z"/>
<path d="M794.0 647.0 C792.2 647.4 786.9 647.8 783.1 649.1 C779.3 650.5 775.0 652.8 771.0 655.1 C767.0 657.5 763.3 660.5 758.9 663.2 C754.5 665.9 749.8 668.7 744.8 671.2 C739.8 673.7 734.1 676.4 728.7 678.3 C723.3 680.1 717.6 681.1 712.6 682.3 C707.6 683.5 702.9 683.8 698.5 685.3 C694.1 686.8 689.9 688.9 686.4 691.4 C682.9 693.9 679.8 696.7 677.3 700.4 C674.8 704.1 673.0 709.0 671.3 713.5 C669.6 718.0 668.6 722.9 667.3 727.6 C665.9 732.3 665.1 736.7 663.2 741.7 C661.4 746.7 658.7 752.8 656.2 757.8 C653.7 762.8 650.8 767.4 648.1 771.9 C645.4 776.4 642.3 780.6 640.1 785.0 C637.9 789.4 636.1 794.1 635.0 798.1 C633.9 802.1 633.8 807.2 633.6 809.0 L794 809 Z"/>
</g>
<rect x="478" y="138" width="1.15" height="706" fill="#84dcd6"/>
<path d="M479.5 138V178M479.5 809V844" stroke="#1f4441" stroke-width="1"/>
<rect x="74" y="492.9" width="810" height="1.15" fill="#84dcd6"/>
<path d="M74 492.4H163M794 492.4H884" stroke="#1f4441" stroke-width="1"/>
<path d="M635 174.5H795.5V334" fill="none" stroke="#000" stroke-width="1"/>
<path d="M639 174.5H795.5" fill="none" stroke="#fff" stroke-width="1" stroke-dasharray="8 8"/>
<path d="M795.5 177V334" fill="none" stroke="#fff" stroke-width="1" stroke-dasharray="8 8"/>
</svg>
</div>
<div class="abs" style="left:2px;top:38px;width:1px;height:42px;background:#414141"></div>
</body></html>
